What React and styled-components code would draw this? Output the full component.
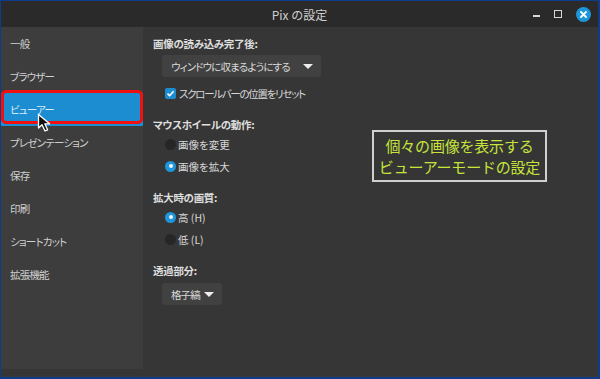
import React from 'react';
import styled, { createGlobalStyle } from 'styled-components';

const GlobalStyle = createGlobalStyle`
  html, body {
    margin: 0;
    padding: 0;
    background: #0d3c8c;
  }
  body {
    font-family: "Noto Sans CJK JP", "Noto Sans", sans-serif;
  }
`;

const Window = styled.div`
  position: relative;
  box-sizing: border-box;
  width: 600px;
  height: 379px;
  display: flex;
  flex-direction: column;
  border: 1px solid #0d3c8c;
  border-width: 1px 2px 2px 1px;
  background: #363636;
  overflow: hidden;
`;

const TitleBar = styled.div`
  position: relative;
  height: 26px;
  flex-shrink: 0;
  background: #2a2a2a;
  display: flex;
  align-items: center;
  justify-content: center;
  color: #cfcfcf;
  font-size: 12px;
`;

const Controls = styled.div`
  position: absolute;
  right: 7px;
  top: 0;
  bottom: 0;
  display: flex;
  align-items: center;
  gap: 14px;
`;

const MinBtn = styled.div`
  width: 7px;
  height: 2px;
  margin-top: 4px;
  background: #d8d8d8;
`;

const MaxBtn = styled.div`
  box-sizing: border-box;
  width: 8px;
  height: 8px;
  border: 1.5px solid #d8d8d8;
`;

const CloseBtn = styled.div`
  width: 15px;
  height: 15px;
  border-radius: 50%;
  background: #1e96dc;
  display: flex;
  align-items: center;
  justify-content: center;
`;

const Body = styled.div`
  flex: 1;
  display: flex;
`;

const Sidebar = styled.div`
  width: 142px;
  margin-bottom: 8px;
  background: #3d3d3d;
  display: flex;
  flex-direction: column;
  font-feature-settings: "palt" 1;
`;

const NavItem = styled.div`
  position: relative;
  height: 33px;
  display: flex;
  align-items: center;
  padding-left: 9px;
  font-size: 10.5px;
  letter-spacing: -0.8px;
  color: ${p => (p.$active ? '#d6ecf8' : '#d0d0d0')};
  background: ${p => (p.$active ? '#1c8dd0' : 'transparent')};

  ${p => p.$active && `
    &::after {
      content: '';
      position: absolute;
      left: 0;
      right: 0;
      top: -3px;
      bottom: 2px;
      border: 3px solid #f01010;
      border-radius: 5px;
    }
  `}
`;

const Main = styled.div`
  flex: 1;
  padding: 9px 0 0 10px;
  color: #d8d8d8;
  font-size: 10.5px;
  font-feature-settings: "palt" 1;
`;

const Section = styled.div`
  margin-top: ${p => p.$top ?? 15}px;
`;

const Heading = styled.div`
  height: 16px;
  line-height: 16px;
  font-weight: bold;
  color: #dedede;
  letter-spacing: -0.3px;
`;

const Dropdown = styled.div`
  box-sizing: border-box;
  display: flex;
  align-items: center;
  justify-content: space-between;
  white-space: nowrap;
  width: ${p => p.$width}px;
  height: 22px;
  margin: ${p => p.$mt ?? 3}px 0 0 9px;
  padding: 0 8px 0 9px;
  background: #414141;
  border-radius: 3px;
  color: #dadada;
  letter-spacing: -0.9px;
`;

const Arrow = styled.span`
  flex-shrink: 0;
  width: 0;
  height: 0;
  border-left: 5px solid transparent;
  border-right: 5px solid transparent;
  border-top: 5px solid #eeeeee;
`;

const CheckRow = styled.div`
  display: flex;
  align-items: center;
  gap: 2px;
  height: 18px;
  margin: 7px 0 0 12px;
  white-space: nowrap;
  letter-spacing: -1.3px;
`;

const CheckBox = styled.div`
  width: 11px;
  height: 11px;
  margin-right: 1px;
  border-radius: 2px;
  background: #1c8dd0;
  display: flex;
  align-items: center;
  justify-content: center;
`;

const RadioRow = styled.div`
  display: flex;
  align-items: center;
  gap: 2px;
  height: 22px;
  padding-left: 12px;
`;

const Radio = styled.div`
  width: 11px;
  height: 11px;
  border-radius: 50%;
  background: ${p => (p.$on ? '#1e96dc' : '#262626')};
  display: flex;
  align-items: center;
  justify-content: center;

  &::after {
    content: '';
    width: 4px;
    height: 4px;
    border-radius: 50%;
    background: ${p => (p.$on ? '#f2f2f2' : 'transparent')};
  }
`;

const Callout = styled.div`
  position: absolute;
  left: 371px;
  top: 129px;
  box-sizing: border-box;
  width: 175px;
  height: 52px;
  border: 2px solid #cfcfcf;
  background: #353535;
  color: #c6e43a;
  font-size: 15px;
  line-height: 21px;
  letter-spacing: -0.2px;
  display: flex;
  flex-direction: column;
  align-items: center;
  justify-content: center;
`;

const Pointer = styled.svg`
  position: absolute;
  left: 36px;
  top: 112px;
`;

const navItems = [
  '一般',
  'ブラウザー',
  'ビューアー',
  'プレゼンテーション',
  '保存',
  '印刷',
  'ショートカット',
  '拡張機能',
];

const App = () => {
  return (
    <>
      <GlobalStyle />
      <Window>
        <TitleBar>
          Pix の設定
          <Controls>
            <MinBtn />
            <MaxBtn />
            <CloseBtn>
              <svg width="7" height="7" viewBox="0 0 7 7">
                <path d="M1 1L6 6M6 1L1 6" stroke="#fff" strokeWidth="1.8" strokeLinecap="round" />
              </svg>
            </CloseBtn>
          </Controls>
        </TitleBar>
        <Body>
          <Sidebar>
            {navItems.map(item => (
              <NavItem key={item} $active={item === 'ビューアー'}>{item}</NavItem>
            ))}
          </Sidebar>
          <Main>
            <Section $top={0}>
              <Heading>画像の読み込み完了後:</Heading>
              <Dropdown $width={159}>
                ウィンドウに収まるようにする
                <Arrow />
              </Dropdown>
              <CheckRow>
                <CheckBox>
                  <svg width="9" height="9" viewBox="0 0 9 9">
                    <path d="M1.5 4.6L3.6 6.7L7.6 2.2" fill="none" stroke="#fff" strokeWidth="1.6" />
                  </svg>
                </CheckBox>
                スクロールバーの位置をリセット
              </CheckRow>
            </Section>
            <Section $top={15}>
              <Heading>マウスホイールの動作:</Heading>
              <RadioRow><Radio />画像を変更</RadioRow>
              <RadioRow><Radio $on />画像を拡大</RadioRow>
            </Section>
            <Section $top={13}>
              <Heading>拡大時の画質:</Heading>
              <RadioRow><Radio $on />高 (H)</RadioRow>
              <RadioRow><Radio />低 (L)</RadioRow>
            </Section>
            <Section $top={13}>
              <Heading>透過部分:</Heading>
              <Dropdown $width={60} $mt={4}>
                格子縞
                <Arrow />
              </Dropdown>
            </Section>
          </Main>
        </Body>
        <Callout>
          <div>個々の画像を表示する</div>
          <div>ビューアーモードの設定</div>
        </Callout>
        <Pointer width="18" height="20" viewBox="0 0 18 20">
          <path d="M1.5 1.5L1.5 15L5 11.8L8 18L10.6 16.8L7.8 10.8L12.6 10.8Z" fill="#111" stroke="#fff" strokeWidth="1.3" strokeLinejoin="round" />
        </Pointer>
      </Window>
    </>
  );
};

export default App;
